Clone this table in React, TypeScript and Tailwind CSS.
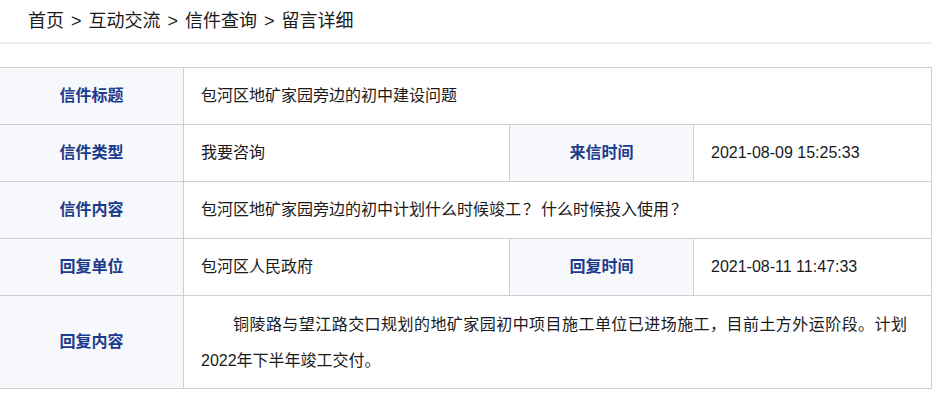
import React from "react";

const font = { fontFamily: '"Liberation Sans", "Noto Sans CJK SC", sans-serif' };

function Label({ children }: { children: React.ReactNode }) {
  return (
    <td className="border border-[#cfcfcf] bg-[#f6f8fc] text-center align-middle text-[16px] font-bold text-[#1c3b8c] p-0">
      {children}
    </td>
  );
}

function Value({ children, colSpan }: { children: React.ReactNode; colSpan?: number }) {
  return (
    <td
      colSpan={colSpan}
      className="border border-[#cfcfcf] bg-white align-middle text-[16px] text-[#1a1a1a] pl-[17px] pr-0 py-0"
    >
      {children}
    </td>
  );
}

function Sep() {
  return <span className="mx-[7px]">&gt;</span>;
}

export default function App() {
  return (
    <div className="w-[950px] h-[417px] bg-white" style={font}>
      <div className="w-[931px]">
        <div className="h-[42px] flex items-center pl-[28px] text-[18px] text-[#1a1a1a]">
          <span>首页</span>
          <Sep />
          <span>互动交流</span>
          <Sep />
          <span>信件查询</span>
          <Sep />
          <span>留言详细</span>
        </div>
        <div className="h-[2px] bg-[#ededed]" />
      </div>
      <div className="pt-[23px]">
        <table className="border-collapse table-fixed -ml-px" style={{ width: 932 }}>
          <colgroup>
            <col style={{ width: 184 }} />
            <col style={{ width: 326 }} />
            <col style={{ width: 184 }} />
            <col style={{ width: 238 }} />
          </colgroup>
          <tbody>
            <tr className="h-[57px]">
              <Label>信件标题</Label>
              <Value colSpan={3}>包河区地矿家园旁边的初中建设问题</Value>
            </tr>
            <tr className="h-[57px]">
              <Label>信件类型</Label>
              <Value>我要咨询</Value>
              <Label>来信时间</Label>
              <Value>2021-08-09 15:25:33</Value>
            </tr>
            <tr className="h-[57px]">
              <Label>信件内容</Label>
              <Value colSpan={3}>
                包河区地矿家园旁边的初中计划什么时候竣工<span className="mx-[2px]">？</span>什么时候投入使用<span className="ml-[2px]">？</span>
              </Value>
            </tr>
            <tr className="h-[57px]">
              <Label>回复单位</Label>
              <Value>包河区人民政府</Value>
              <Label>回复时间</Label>
              <Value>2021-08-11 11:47:33</Value>
            </tr>
            <tr className="h-[93px]">
              <Label>回复内容</Label>
              <td
                colSpan={3}
                className="border border-[#cfcfcf] bg-white align-middle text-[16px] text-[#1a1a1a] pl-[17px] pr-[24px] py-0"
              >
                <p className="indent-[2em] leading-[36px] text-justify w-[706px] pt-[2px]">
                  铜陵路与望江路交口规划的地矿家园初中项目施工单位已进场施工，目前土方外运阶段。计划2022年下半年竣工交付。
                </p>
              </td>
            </tr>
          </tbody>
        </table>
      </div>
    </div>
  );
}
